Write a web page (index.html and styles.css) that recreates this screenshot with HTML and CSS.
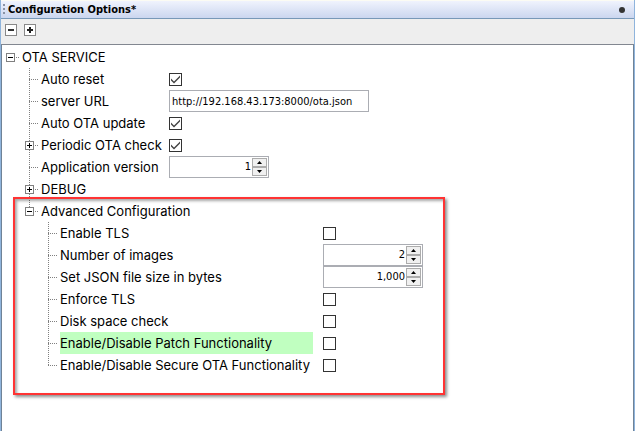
FILE: index.html
```html
<!DOCTYPE html>
<html lang="en">
<head>
<meta charset="utf-8">
<title>Configuration Options</title>
<link rel="stylesheet" href="styles.css">
</head>
<body>
<main class="panel">
  <header class="titlebar">
    <span class="grip"></span>
    <h1 class="title">Configuration Options*</h1>
    <span class="dot"></span>
  </header>
  <div class="toolbar">
    <button class="tool" type="button" aria-label="Collapse all"><svg width="12" height="12" viewBox="0 0 12 12"><path d="M3 6h6" stroke="#333" stroke-width="2"/></svg></button>
    <button class="tool" type="button" aria-label="Expand all"><svg width="12" height="12" viewBox="0 0 12 12"><path d="M3 6h6M6 3v6" stroke="#222" stroke-width="2"/></svg></button>
  </div>
  <div class="content">
    <div class="row">
      <span class="twig"><button class="toggle open" type="button" aria-label="Collapse OTA SERVICE"></button></span>
      <span class="label">OTA SERVICE</span>
    </div>
    <ul class="branch">
      <li class="node"><div class="row"><span class="twig"></span><label class="label" for="reset">Auto reset</label><input class="check" id="reset" type="checkbox" checked></div></li>
      <li class="node"><div class="row"><span class="twig"></span><label class="label" for="url">server URL</label><input class="text" id="url" type="text" value="http://192.168.43.173:8000/ota.json"></div></li>
      <li class="node"><div class="row"><span class="twig"></span><label class="label" for="auto">Auto OTA update</label><input class="check" id="auto" type="checkbox" checked></div></li>
      <li class="node"><div class="row"><span class="twig"><button class="toggle" type="button" aria-label="Expand Periodic OTA check"></button></span><label class="label" for="periodic">Periodic OTA check</label><input class="check" id="periodic" type="checkbox" checked></div></li>
      <li class="node"><div class="row"><span class="twig"></span><label class="label" for="version">Application version</label><span class="spinner"><input class="number" id="version" type="text" inputmode="numeric" value="1"><span class="steps"><button class="step up" type="button" aria-label="Increase"></button><button class="step down" type="button" aria-label="Decrease"></button></span></span></div></li>
      <li class="node"><div class="row"><span class="twig"><button class="toggle" type="button" aria-label="Expand DEBUG"></button></span><span class="label">DEBUG</span></div></li>
      <li class="node">
        <div class="row"><span class="twig"><button class="toggle open" type="button" aria-label="Collapse Advanced Configuration"></button></span><span class="label">Advanced Configuration</span></div>
        <ul class="branch nested">
          <li class="node"><div class="row"><span class="twig"></span><label class="label" for="tls">Enable TLS</label><input class="check" id="tls" type="checkbox"></div></li>
          <li class="node"><div class="row"><span class="twig"></span><label class="label" for="images">Number of images</label><span class="spinner"><input class="number" id="images" type="text" inputmode="numeric" value="2"><span class="steps"><button class="step up" type="button" aria-label="Increase"></button><button class="step down" type="button" aria-label="Decrease"></button></span></span></div></li>
          <li class="node"><div class="row"><span class="twig"></span><label class="label" for="size">Set JSON file size in bytes</label><span class="spinner"><input class="number" id="size" type="text" inputmode="numeric" value="1,000"><span class="steps"><button class="step up" type="button" aria-label="Increase"></button><button class="step down" type="button" aria-label="Decrease"></button></span></span></div></li>
          <li class="node"><div class="row"><span class="twig"></span><label class="label" for="enforce">Enforce TLS</label><input class="check" id="enforce" type="checkbox"></div></li>
          <li class="node"><div class="row"><span class="twig"></span><label class="label" for="disk">Disk space check</label><input class="check" id="disk" type="checkbox"></div></li>
          <li class="node"><div class="row"><span class="twig"></span><label class="label selected" for="patch">Enable/Disable Patch Functionality</label><input class="check" id="patch" type="checkbox"></div></li>
          <li class="node"><div class="row"><span class="twig"></span><label class="label" for="secure">Enable/Disable Secure OTA Functionality</label><input class="check" id="secure" type="checkbox"></div></li>
        </ul>
        <div class="callout"></div>
      </li>
    </ul>
  </div>
</main>
</body>
</html>
```
FILE: styles.css
```css
* { box-sizing: border-box; }

body {
  margin: 0;
  background: #fff;
  color: #000;
  font: 13px/22px Inter, Verdana, sans-serif;
}

.panel {
  min-height: 100vh;
  margin-right: 1px;
  display: flex;
  flex-direction: column;
  border: solid #8fb4dc;
  border-width: 0 1px;
}

.titlebar {
  height: 19px;
  display: flex;
  align-items: center;
  gap: 3px;
  padding: 0 9px 0 2px;
  border-top: 1px solid #fbfbf3;
  border-bottom: 1px solid #7898b8;
  background: linear-gradient(#f0f3fd, #cbd6ef);
}

.grip {
  width: 2px;
  height: 12px;
  background: repeating-linear-gradient(#8a93a5 0 2px, transparent 2px 4px);
}

.title {
  flex: 1;
  margin: 0;
  font: bold 11px/16px "DejaVu Sans Condensed", Tahoma, sans-serif;
}

.dot {
  width: 6px;
  height: 6px;
  border-radius: 50%;
  background: #333;
}

.toolbar {
  height: 26px;
  display: flex;
  align-items: center;
  gap: 7px;
  padding: 0 4px 3px;
  border-bottom: 1px solid #828790;
  background: #eee;
}

.tool {
  width: 12px;
  height: 12px;
  padding: 0;
  border: 1px solid #888;
  background: #fff;
  overflow: hidden;
}

.tool svg {
  display: block;
  margin: -1px;
}

.content {
  flex: 1;
  padding: 1px 4px;
  border: solid #6f8296;
  border-width: 0 1px;
}

.branch {
  margin: 0;
  padding: 0 0 0 19px;
  list-style: none;
}

.node { position: relative; }

.node::before {
  content: "";
  position: absolute;
  left: 4px;
  top: 0;
  width: 1px;
  height: 100%;
  background: repeating-linear-gradient(#808080 0 1px, transparent 1px 2px);
}

.node:last-child::before { height: 12px; }

.row {
  display: grid;
  grid-template-columns: 16px 118px auto;
  justify-content: start;
  align-items: center;
  height: 22px;
}

.nested .row { grid-template-columns: 16px 253px auto; }

.twig {
  position: relative;
  display: flex;
  height: 9px;
}

.twig::before {
  content: "";
  position: absolute;
  left: 4px;
  top: 4px;
  width: 10px;
  height: 1px;
  background: repeating-linear-gradient(90deg, #808080 0 1px, transparent 1px 2px);
}

.toggle {
  position: relative;
  width: 9px;
  height: 9px;
  padding: 0;
  border: 1px solid #808080;
  background:
    linear-gradient(#000, #000) center / 5px 1px no-repeat,
    linear-gradient(#000, #000) center / 1px 5px no-repeat,
    #fff;
}

.toggle.open {
  background: linear-gradient(#000, #000) center / 5px 1px no-repeat, #fff;
}

.label { white-space: nowrap; }

.selected { background: #c0ffc0; }

.check,
.text,
.spinner { margin: 0 0 0 10px; }

.check {
  appearance: none;
  width: 13px;
  height: 13px;
  border: 1px solid #333;
  background: #fff;
}

.check:checked::before {
  content: "";
  display: block;
  width: 11px;
  height: 11px;
  background: #444;
  clip-path: polygon(1px 5px, 4px 8px, 10px 2px, 10px 4px, 4px 10px, 1px 7px);
}

.text,
.number {
  font: 11px/18px "DejaVu Sans Condensed", Tahoma, sans-serif;
  color: #000;
}

.text {
  width: 200px;
  height: 22px;
  padding: 0 2px;
  border: 1px solid #abadb3;
}

.spinner {
  display: flex;
  width: 100px;
  height: 22px;
  padding: 1px;
  border: 1px solid #abadb3;
}

.number {
  flex: 1;
  min-width: 0;
  padding: 0 1px;
  border: 0;
  text-align: right;
}

.steps {
  display: grid;
  width: 15px;
  background: #eee;
}

.step {
  display: grid;
  place-items: center;
  padding: 0;
  border: 1px solid #acacac;
  background: #f0f0f0;
}

.step::before {
  content: "";
  width: 5px;
  height: 3px;
  background: #000;
  clip-path: polygon(50% 0, 100% 100%, 0 100%);
}

.step.down::before { clip-path: polygon(0 0, 100% 0, 50% 100%); }

/* Highlight frame drawn over the advanced section */
.callout {
  position: absolute;
  left: -12px;
  top: -3px;
  width: 432px;
  height: 198px;
  border: 2px solid #f33;
  box-shadow: 2px 2px 3px rgba(0, 0, 0, .45), inset 2px 2px 3px rgba(0, 0, 0, .35);
  pointer-events: none;
}
```
